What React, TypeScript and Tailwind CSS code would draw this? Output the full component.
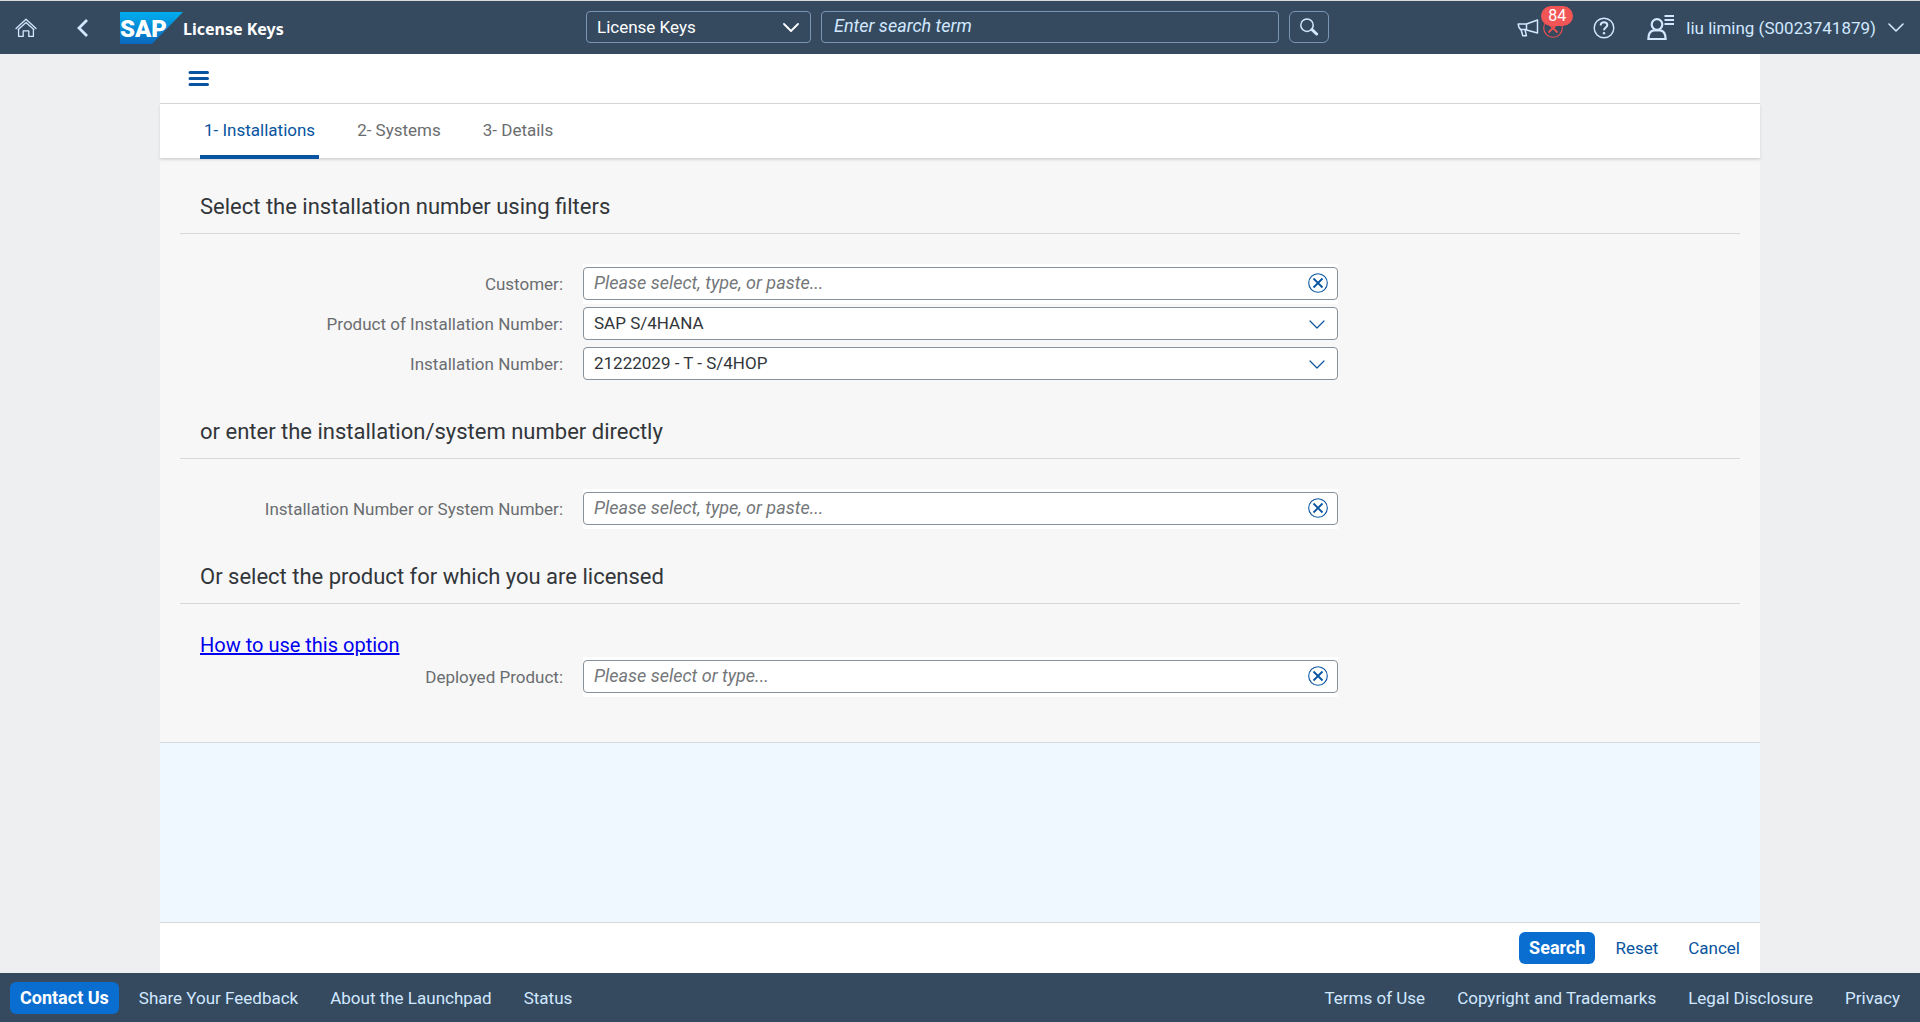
import { useState } from "react";
import type { ReactNode } from "react";

const TABS = ["1- Installations", "2- Systems", "3- Details"];

const FOOTER_LEFT = ["Share Your Feedback", "About the Launchpad", "Status"];
const FOOTER_RIGHT = ["Terms of Use", "Copyright and Trademarks", "Legal Disclosure", "Privacy"];

function ChevronIcon({ className, weight = 1.2 }: { className?: string; weight?: number }) {
  return (
    <svg className={className} width="16" height="9" viewBox="0 0 16 9" fill="none" stroke="currentColor" strokeWidth={weight} strokeLinecap="round" strokeLinejoin="round">
      <path d="M1 1l7 7 7-7" />
    </svg>
  );
}

function HomeIcon() {
  return (
    <svg width="22" height="20" viewBox="0 0 22 20" fill="none" stroke="currentColor" strokeWidth={1.3} strokeLinejoin="round" strokeLinecap="round">
      <path d="M1 10.5L11 1.2l10 9.3" />
      <path d="M3.2 11.5L11 4.4l7.8 7.1" />
      <path d="M3.6 11.5v6.9h4.6v-5.6h5.6v5.6h4.6v-6.9" />
    </svg>
  );
}

function SapLogo() {
  return (
    <svg width="63" height="32" viewBox="0 0 63 32" role="img" aria-label="SAP">
      <defs>
        <linearGradient id="sap-bg" x1="0" y1="0" x2="0" y2="1">
          <stop offset="0" stopColor="#00aeef" />
          <stop offset="1" stopColor="#0a68bd" />
        </linearGradient>
      </defs>
      <path d="M0 0h63L32 32H0z" fill="url(#sap-bg)" />
      <text x="0" y="25" fill="#fff" fontFamily="Roboto, sans-serif" fontWeight="900" fontSize="24">SAP</text>
    </svg>
  );
}

function SearchIcon() {
  return (
    <svg width="20" height="18" viewBox="0 0 20 18" fill="none" stroke="currentColor" strokeLinecap="round">
      <circle cx="8" cy="7.2" r="6.2" strokeWidth={1.5} />
      <path d="M13 11.6l4.6 4.4" strokeWidth={3} />
    </svg>
  );
}

function MegaphoneIcon() {
  return (
    <svg width="22" height="18" viewBox="0 0 22 18" fill="none" stroke="currentColor" strokeWidth={1.5} strokeLinejoin="round">
      <path d="M9.5 5L20.5 1v13L9.5 11z" />
      <path d="M9.5 5H1.2c.2 2.6.9 4.5 2.6 5.5h5.7" />
      <path d="M4 10.5l1.8 6.2h3.6L8 10.7" />
    </svg>
  );
}

function HelpIcon() {
  return (
    <svg width="22" height="22" viewBox="0 0 22 22" fill="none" stroke="currentColor">
      <circle cx="11" cy="11" r="9.8" strokeWidth={1.4} />
      <path d="M7.7 8.4C7.7 6.4 9 5.2 11 5.2s3.3 1.2 3.3 2.9c0 2.4-3.3 2.6-3.3 5.2" strokeWidth={2} />
      <circle cx="11" cy="16.2" r=".9" fill="currentColor" />
    </svg>
  );
}

function UserIcon() {
  return (
    <svg width="27" height="27" viewBox="0 0 27 27" fill="none" stroke="currentColor" strokeWidth={2.2}>
      <circle cx="10" cy="10.5" r="5.3" />
      <path d="M1.4 25c0-5 2.2-8 5.2-8.6h6.8c3 .6 5.2 3.6 5.2 8.6z" />
      <path d="M17.5 2H27M17.5 6H27M17.5 10H27" strokeWidth={2} />
    </svg>
  );
}

function ClearIcon() {
  return (
    <svg width="20" height="20" viewBox="0 0 20 20" fill="none" stroke="currentColor">
      <circle cx="10" cy="10" r="9.3" strokeWidth={1.1} />
      <path d="M5.5 5.5l9 9M14.5 5.5l-9 9" strokeWidth={1.8} />
    </svg>
  );
}

function Row({ id, label, children }: { id: string; label: string; children: ReactNode }) {
  return (
    <div className="grid h-10 grid-cols-[1fr_2fr_1fr]">
      <label htmlFor={id} className="flex justify-end self-center pr-[17px] whitespace-nowrap text-[#6a6d70]">
        {label}
      </label>
      {children}
    </div>
  );
}

// free-text field, sits on a white strip slightly taller than itself
function TextField({ id, label, placeholder }: { id: string; label: string; placeholder: string }) {
  const [value, setValue] = useState("");

  return (
    <Row id={id} label={label}>
      <div className="mr-0.5 ml-[3px] bg-white pt-[3px]">
        <div className="flex h-[33px] items-center rounded-sm border border-[#89919a] pr-[9px] pb-px pl-2.5">
          <input
            id={id}
            value={value}
            onChange={(e) => setValue(e.target.value)}
            placeholder={placeholder}
            className="h-full min-w-0 flex-1 bg-transparent pb-px text-lg text-[#32363a] outline-none placeholder:text-[#74777a] placeholder:italic"
          />
          <button type="button" aria-label="Clear" onClick={() => setValue("")} className="text-[#0854a0]">
            <ClearIcon />
          </button>
        </div>
      </div>
    </Row>
  );
}

function SelectField({ id, label, options }: { id: string; label: string; options: string[] }) {
  return (
    <Row id={id} label={label}>
      <div className="relative mt-[3px] mr-0.5 ml-[3px] h-[33px]">
        <select id={id} className="h-full w-full appearance-none rounded-sm border border-[#89919a] bg-white pr-10 pb-0.5 pl-2.5 text-[#32363a] outline-none">
          {options.map((o) => (
            <option key={o}>{o}</option>
          ))}
        </select>
        <ChevronIcon className="pointer-events-none absolute top-[13px] right-[13px] text-[#0854a0]" />
      </div>
    </Row>
  );
}

function SectionTitle({ children }: { children: ReactNode }) {
  return (
    <h2 className="flex h-[55px] items-center border-b border-[#d9d9d9] px-5 pt-0.5 text-[22px] text-[#32363a]">{children}</h2>
  );
}

function Header() {
  return (
    <header className="flex h-[54px] items-center border-t border-[#d5dadd] bg-[#354a5f] text-[#d1e8ff]">
      <div className="flex flex-1 items-center pl-[15px]">
        <button type="button" aria-label="Home">
          <HomeIcon />
        </button>
        <button type="button" aria-label="Back" className="ml-10">
          <svg width="11" height="18" viewBox="0 0 11 18" fill="none" stroke="currentColor" strokeWidth={2.8}>
            <path d="M10 1L2 9l8 8" />
          </svg>
        </button>
        <a href="#" className="ml-8 flex items-center">
          <SapLogo />
        </a>
        <h1 className="pt-0.5 font-['Noto_Sans',sans-serif] text-base font-bold whitespace-nowrap text-white">License Keys</h1>
      </div>

      <form className="mr-1 flex items-center pb-0.5" onSubmit={(e) => e.preventDefault()}>
        <div className="relative h-8 w-[225px]">
          <select aria-label="Search scope" className="h-full w-full appearance-none rounded-sm border border-[#7996b4] bg-[#354a5f] pr-10 pl-2.5 text-white outline-none">
            <option>License Keys</option>
          </select>
          <ChevronIcon weight={1.8} className="pointer-events-none absolute top-3 right-3 text-white" />
        </div>
        <input
          type="search"
          aria-label="Search"
          placeholder="Enter search term"
          className="ml-2.5 h-8 w-[458px] rounded-sm border border-[#7996b4] bg-transparent px-3 pb-0.5 text-lg text-white outline-none placeholder:text-[#d1e8ff] placeholder:italic"
        />
        <button type="submit" aria-label="Search" className="ml-2.5 flex h-8 w-10 items-center justify-center rounded-md border border-[#7996b4]">
          <SearchIcon />
        </button>
      </form>

      <div className="flex flex-1 items-center justify-end pr-4">
        <button type="button" aria-label="Notifications, 84 unread" className="relative flex items-center gap-1">
          <MegaphoneIcon />
          <span className="text-[#ee4f4f]">
            <ClearIcon />
          </span>
          <span className="absolute -top-3 left-6 flex h-5 w-8 items-center justify-center rounded-full bg-[#f25556] text-base text-white">84</span>
        </button>
        <button type="button" aria-label="Help" className="ml-[30px]">
          <HelpIcon />
        </button>
        <button type="button" className="ml-8 flex items-center">
          <UserIcon />
          <span className="ml-3 whitespace-nowrap">liu liming (S0023741879)</span>
          <ChevronIcon weight={1.6} className="ml-3" />
        </button>
      </div>
    </header>
  );
}

export default function App() {
  const [tab, setTab] = useState(0);

  return (
    <div className="flex min-h-screen flex-col bg-[#edeff0] font-['Roboto',sans-serif] text-[17px] leading-6">
      <Header />

      <main className="mx-auto flex w-full max-w-[1600px] flex-1 flex-col bg-white">
        <div className="flex h-[50px] items-center border-b border-[#d9d9d9] px-7">
          <button type="button" aria-label="Menu" className="text-[#0854a0]">
            <svg width="22" height="15" viewBox="0 0 22 15" fill="none" stroke="currentColor" strokeWidth={3} strokeLinecap="round">
              <path d="M2 1.5h17.5M2 7.5h17.5M2 13.5h17.5" />
            </svg>
          </button>
        </div>

        <nav className="z-10 flex h-[55px] gap-[34px] border-b border-[#d9d9d9] px-10 shadow-sm">
          {TABS.map((t, i) => (
            <button
              key={t}
              type="button"
              onClick={() => setTab(i)}
              className={
                i === tab
                  ? "-mb-px rounded-t-sm border-b-4 border-[#0854a0] px-1 text-[#0854a0]"
                  : "-mb-px border-b-4 border-transparent px-1 text-[#6a6d70]"
              }
            >
              {t}
            </button>
          ))}
        </nav>

        <div className="border-b border-[#d9d9d9] bg-[#f7f7f7] px-5 pt-5 pb-[45px]">
          <section>
            <SectionTitle>Select the installation number using filters</SectionTitle>
            <div className="px-5 pt-[30px]">
              <TextField id="customer" label="Customer:" placeholder="Please select, type, or paste..." />
              <SelectField id="product" label="Product of Installation Number:" options={["SAP S/4HANA"]} />
              <SelectField id="installation" label="Installation Number:" options={["21222029 - T - S/4HOP"]} />
            </div>
          </section>

          <section className="pt-5">
            <SectionTitle>or enter the installation/system number directly</SectionTitle>
            <div className="px-5 pt-[30px]">
              <TextField id="number" label="Installation Number or System Number:" placeholder="Please select, type, or paste..." />
            </div>
          </section>

          <section className="pt-5">
            <SectionTitle>Or select the product for which you are licensed</SectionTitle>
            <div className="px-5 pt-[29px]">
              <a href="#" className="block w-fit text-xl leading-6 text-[#0000ee] underline">
                How to use this option
              </a>
              <TextField id="deployed" label="Deployed Product:" placeholder="Please select or type..." />
            </div>
          </section>
        </div>

        <div className="flex-1 bg-[#eff7ff]" />

        <div className="flex h-[51px] items-center justify-end border-t border-[#d9d9d9] px-5 text-[#0854a0]">
          <button type="button" className="h-8 rounded-md bg-[#0a6ed1] px-2.5 text-lg font-bold text-white">Search</button>
          <button type="button" className="ml-5">Reset</button>
          <button type="button" className="ml-[30px]">Cancel</button>
        </div>
      </main>

      <footer className="flex h-[49px] items-center justify-between bg-[#354a5f] pr-5 pl-2.5 whitespace-nowrap text-[#d1e8ff]">
        <div className="flex items-center">
          <button type="button" className="mr-5 h-8 rounded-md bg-[#0a6ed1] px-2.5 text-lg font-bold text-white">Contact Us</button>
          <nav className="flex gap-8">
            {FOOTER_LEFT.map((l) => (
              <a key={l} href="#">{l}</a>
            ))}
          </nav>
        </div>
        <nav className="flex gap-8">
          {FOOTER_RIGHT.map((l) => (
            <a key={l} href="#">{l}</a>
          ))}
        </nav>
      </footer>
    </div>
  );
}
